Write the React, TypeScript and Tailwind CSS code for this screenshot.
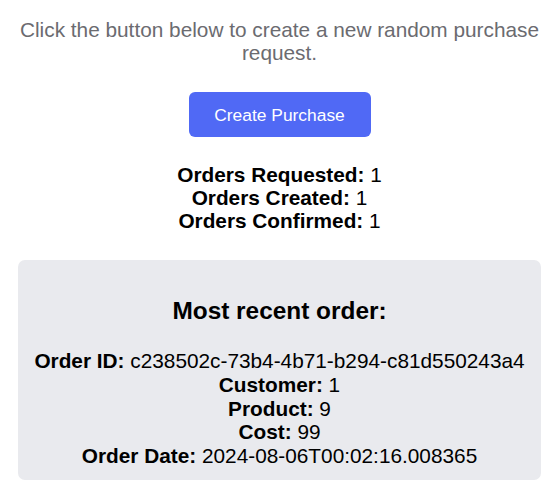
import React from "react";

export default function App() {
  return (
    <div
      className="w-full bg-white text-[20.8px] leading-[23px] text-black text-center"
      style={{ fontFamily: '"Liberation Sans", Arial, sans-serif' }}
    >
      <div className="pt-[18px] px-[8px]">
        <p className="text-[#6b6b70]">
          Click the button below to create a new random purchase request.
        </p>
        <div className="mt-[28px] flex justify-center">
          <button className="w-[182px] h-[45px] rounded-[6px] bg-[#5069f5] text-white text-[17.4px] leading-[20px]">
            Create Purchase
          </button>
        </div>
        <div className="mt-[26px]">
          <div>
            <b>Orders Requested:</b> 1
          </div>
          <div>
            <b>Orders Created:</b> 1
          </div>
          <div>
            <b>Orders Confirmed:</b> 1
          </div>
        </div>
      </div>
      <div className="mx-[18px] mt-[28px] rounded-[7px] bg-[#e9eaee] pt-[37px] pb-[12px]">
        <h2 className="text-[24.4px] leading-[27px] font-bold">Most recent order:</h2>
        <div className="mt-[25px] leading-[23.75px]">
          <div>
            <b>Order ID:</b> c238502c-73b4-4b71-b294-c81d550243a4
          </div>
          <div>
            <b>Customer:</b> 1
          </div>
          <div>
            <b>Product:</b> 9
          </div>
          <div>
            <b>Cost:</b> 99
          </div>
          <div>
            <b>Order Date:</b> 2024-08-06T00:02:16.008365
          </div>
        </div>
      </div>
    </div>
  );
}
